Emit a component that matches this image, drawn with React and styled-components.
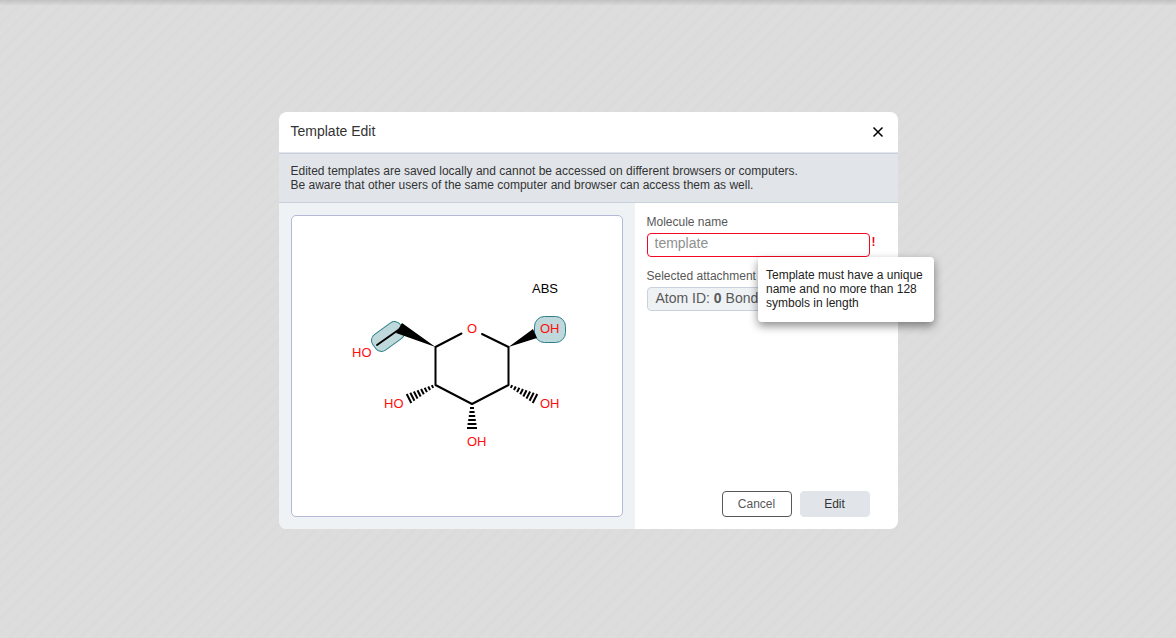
import React from "react";
import styled, { createGlobalStyle } from "styled-components";

const GlobalStyle = createGlobalStyle`
  *, *::before, *::after { box-sizing: border-box; }
  body {
    margin: 0;
    color: #333;
    font-family: "Liberation Sans", Arial, sans-serif;
    font-size: 12px;
    line-height: 14px;
  }
  button, input { font: inherit; color: inherit; }
`;

const Backdrop = styled.main`
  min-height: 100vh;
  display: flex;
  align-items: center;
  justify-content: center;
  padding: 16px;
  background:
    linear-gradient(rgba(0, 0, 0, 0.12), transparent 6px),
    repeating-linear-gradient(135deg, #dddddd 0 5px, #dbdbdb 7px 8px, #dddddd 10px);
`;

const Dialog = styled.section`
  width: 100%;
  max-width: 619px;
  margin-top: 3px;
  background: #fff;
  border-radius: 8px;
`;

const Header = styled.header`
  display: flex;
  align-items: center;
  justify-content: space-between;
  height: 41px;
  padding: 0 12px 2px;
  border-bottom: 1px solid #e1e5ea;
`;

const Title = styled.h1`
  margin: 0;
  font-size: 14px;
  font-weight: 400;
  line-height: 16px;
`;

const CloseButton = styled.button`
  display: flex;
  padding: 0;
  border: 0;
  background: none;
  color: #000;
`;

const Notice = styled.p`
  margin: 0;
  padding: 10px 12px;
  background: #e1e5ea;
  border: solid #c8d0de;
  border-width: 1px 0;
`;

const Body = styled.div`
  display: grid;
  grid-template-columns: 356fr 263fr;
`;

const PreviewPane = styled.div`
  padding: 12px;
  background: #eff2f5;
  border-bottom-left-radius: 8px;
`;

const Preview = styled.div`
  border: 1px solid #b4b9d6;
  border-radius: 5px;
  background: #fff;
  svg { display: block; width: 100%; height: auto; }
`;

const Form = styled.form`
  display: flex;
  flex-direction: column;
  min-width: 0;
  padding: 12px 28px 12px 12px;
`;

const Label = styled.label`
  margin-bottom: 4px;
  color: #585858;
`;

const NameField = styled.div`
  position: relative;
  margin-bottom: 12px;
`;

const NameInput = styled.input`
  display: block;
  width: 100%;
  height: 24px;
  padding: 0 7px 4px;
  border: 1px solid #f40724;
  border-radius: 4px;
  background: #fff;
  font-size: 14px;
  outline: 0;
  &::placeholder { color: #8f8f8f; opacity: 1; }
`;

const ErrorMark = styled.span`
  position: absolute;
  left: 100%;
  top: 2px;
  margin-left: 2px;
  color: #f40724;
  font-weight: 700;
`;

const Tooltip = styled.div`
  position: absolute;
  z-index: 1;
  top: 100%;
  left: 50%;
  width: 176px;
  padding: 11px 8px 12px;
  border-radius: 4px;
  background: #fff;
  box-shadow: 0 4px 10px rgba(0, 0, 0, 0.45);
  color: #222;
`;

const Attachment = styled.output`
  height: 24px;
  padding: 2px 8px;
  border: 1px solid #cad3dd;
  border-radius: 4px;
  background: #eff2f5;
  color: #585858;
  font-size: 14px;
  line-height: 16px;
  white-space: nowrap;
  overflow: hidden;
`;

const Actions = styled.div`
  display: flex;
  justify-content: flex-end;
  gap: 8px;
  margin-top: auto;
`;

const Button = styled.button`
  width: 70px;
  height: 26px;
  padding: 0;
  border: 1px solid ${(p) => (p.$primary ? "#e1e5ea" : "#585858")};
  border-radius: 4px;
  background: ${(p) => (p.$primary ? "#e1e5ea" : "#fff")};
  color: ${(p) => (p.$primary ? "#333" : "#585858")};
`;

const AtomLabel = styled.text`
  fill: ${(p) => (p.$plain ? "#000" : "#ff0d0d")};
  font-size: 13px;
`;

const hashLines = (from, to, count, startHalf, endHalf) => {
  const dx = to[0] - from[0];
  const dy = to[1] - from[1];
  const len = Math.hypot(dx, dy);
  return Array.from({ length: count }, (_, i) => {
    const t = i / (count - 1);
    const half = startHalf + (endHalf - startHalf) * t;
    const x = from[0] + dx * t;
    const y = from[1] + dy * t;
    const nx = (-dy / len) * half;
    const ny = (dx / len) * half;
    return `M${x - nx} ${y - ny}L${x + nx} ${y + ny}`;
  }).join("");
};

function Molecule() {
  return (
    <svg viewBox="0 0 330 300" role="img" aria-label="Molecule structure">
      <g fill="#bfd8db" stroke="#2b8088">
        <rect x="79" y="111" width="34" height="19" rx="7" transform="rotate(-36 96 120.5)" />
        <rect x="242.5" y="100.5" width="31" height="26" rx="10" />
      </g>
      <g fill="none" stroke="#000" strokeWidth="2" strokeLinecap="round" strokeLinejoin="round">
        <path d="M169.5 117.5L143.5 131V169L180 188L216.5 169V131L190 118M107 113.5L85 129" />
        <path strokeLinecap="butt" d={hashLines([140.5, 170.5], [117, 182.5], 8, 1.5, 5)} />
        <path strokeLinecap="butt" d={hashLines([219.5, 170.5], [243, 182.5], 8, 1.5, 5)} />
        <path strokeLinecap="butt" d={hashLines([180, 192], [180, 212], 6, 2, 5)} />
      </g>
      <path d="M143.5 131L110 107L104 117ZM216.5 131L241 113L245 122Z" />
      <AtomLabel x="175" y="117">O</AtomLabel>
      <AtomLabel x="248" y="117">OH</AtomLabel>
      <AtomLabel x="60" y="141">HO</AtomLabel>
      <AtomLabel x="92" y="192">HO</AtomLabel>
      <AtomLabel x="248" y="192">OH</AtomLabel>
      <AtomLabel x="175" y="230">OH</AtomLabel>
      <AtomLabel x="240" y="77" $plain>ABS</AtomLabel>
    </svg>
  );
}

export default function App() {
  return (
    <>
      <GlobalStyle />
      <Backdrop>
        <Dialog role="dialog" aria-labelledby="dialog-title">
          <Header>
            <Title id="dialog-title">Template Edit</Title>
            <CloseButton type="button" aria-label="Close">
              <svg width="16" height="16" viewBox="0 0 16 16" fill="none" stroke="currentColor" strokeWidth="1.5">
                <path d="M3.5 4.5L12.5 13.5M12.5 4.5L3.5 13.5" />
              </svg>
            </CloseButton>
          </Header>
          <Notice>
            Edited templates are saved locally and cannot be accessed on different browsers or computers.
            <br />
            Be aware that other users of the same computer and browser can access them as well.
          </Notice>
          <Body>
            <PreviewPane>
              <Preview>
                <Molecule />
              </Preview>
            </PreviewPane>
            <Form>
              <Label htmlFor="name">Molecule name</Label>
              <NameField>
                <NameInput id="name" placeholder="template" aria-describedby="name-error" />
                <ErrorMark>!</ErrorMark>
                <Tooltip id="name-error" role="tooltip">
                  Template must have a unique name and no more than 128 symbols in length
                </Tooltip>
              </NameField>
              <Label htmlFor="attachment">Selected attachment points</Label>
              <Attachment id="attachment">
                Atom ID: <b>0</b> Bond ID: <b>0</b>
              </Attachment>
              <Actions>
                <Button type="button">Cancel</Button>
                <Button type="button" $primary>Edit</Button>
              </Actions>
            </Form>
          </Body>
        </Dialog>
      </Backdrop>
    </>
  );
}
